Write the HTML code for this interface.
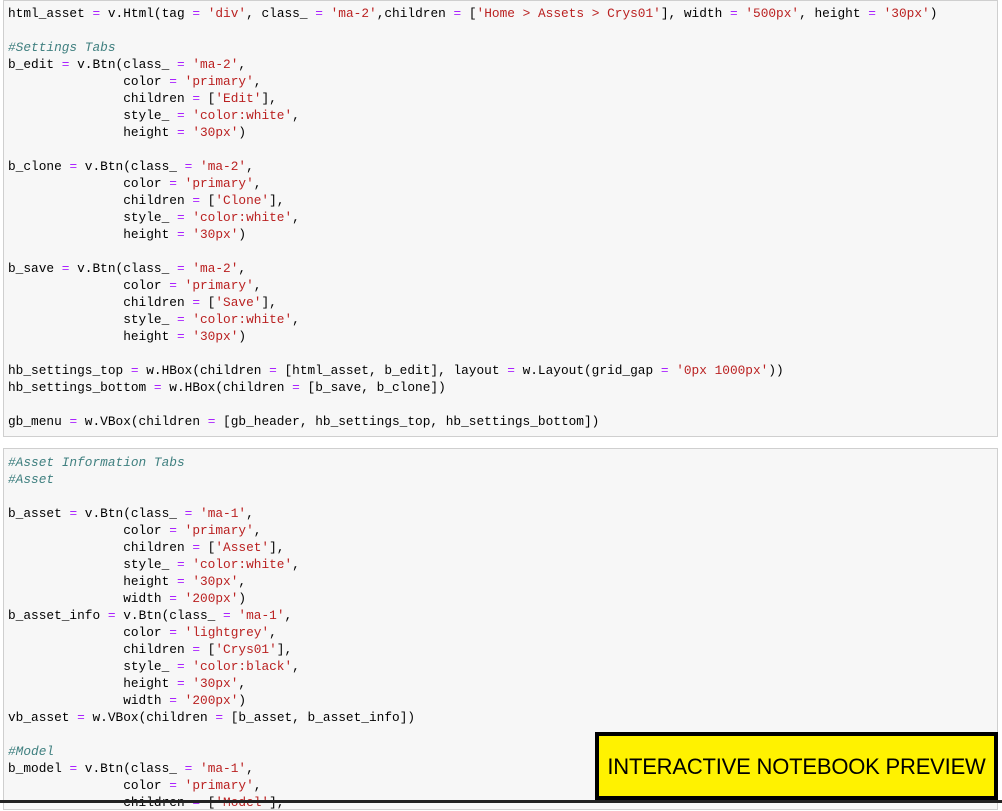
<!DOCTYPE html>
<html><head><style>
body{margin:0;background:#fff;width:1002px;height:803px;overflow:hidden;position:relative;font-family:"Liberation Mono",monospace;}
.cell{position:absolute;left:3px;width:993px;background:#f7f7f7;border:1px solid #cfcfcf;}
pre{margin:0;position:absolute;left:4px;font-family:"Liberation Mono",monospace;font-size:12.8px;line-height:17px;color:#000;}
.o{color:#aa22ff}.s{color:#ba2121}.c{color:#408080;font-style:italic}
#yb{position:absolute;left:595px;top:732px;width:395px;height:60px;background:#fff200;border:4px solid #000;font-family:"Liberation Sans",sans-serif;font-size:22px;line-height:62px;text-align:center;white-space:nowrap;letter-spacing:-0.2px}
#bl{position:absolute;left:0;top:800px;width:1002px;height:3px;background:#222}
</style></head><body>
<div class="cell" style="top:0;height:435px">
<pre style="top:4px">html_asset <span class="o">=</span> v.Html(tag <span class="o">=</span> <span class="s">'div'</span>, class_ <span class="o">=</span> <span class="s">'ma-2'</span>,children <span class="o">=</span> [<span class="s">'Home &gt; Assets &gt; Crys01'</span>], width <span class="o">=</span> <span class="s">'500px'</span>, height <span class="o">=</span> <span class="s">'30px'</span>)

<span class="c">#Settings Tabs</span>
b_edit <span class="o">=</span> v.Btn(class_ <span class="o">=</span> <span class="s">'ma-2'</span>,
               color <span class="o">=</span> <span class="s">'primary'</span>,
               children <span class="o">=</span> [<span class="s">'Edit'</span>],
               style_ <span class="o">=</span> <span class="s">'color:white'</span>,
               height <span class="o">=</span> <span class="s">'30px'</span>)

b_clone <span class="o">=</span> v.Btn(class_ <span class="o">=</span> <span class="s">'ma-2'</span>,
               color <span class="o">=</span> <span class="s">'primary'</span>,
               children <span class="o">=</span> [<span class="s">'Clone'</span>],
               style_ <span class="o">=</span> <span class="s">'color:white'</span>,
               height <span class="o">=</span> <span class="s">'30px'</span>)

b_save <span class="o">=</span> v.Btn(class_ <span class="o">=</span> <span class="s">'ma-2'</span>,
               color <span class="o">=</span> <span class="s">'primary'</span>,
               children <span class="o">=</span> [<span class="s">'Save'</span>],
               style_ <span class="o">=</span> <span class="s">'color:white'</span>,
               height <span class="o">=</span> <span class="s">'30px'</span>)

hb_settings_top <span class="o">=</span> w.HBox(children <span class="o">=</span> [html_asset, b_edit], layout <span class="o">=</span> w.Layout(grid_gap <span class="o">=</span> <span class="s">'0px 1000px'</span>))
hb_settings_bottom <span class="o">=</span> w.HBox(children <span class="o">=</span> [b_save, b_clone])

gb_menu <span class="o">=</span> w.VBox(children <span class="o">=</span> [gb_header, hb_settings_top, hb_settings_bottom])</pre>
</div>
<div class="cell" style="top:448px;height:360px">
<pre style="top:5px"><span class="c">#Asset Information Tabs</span>
<span class="c">#Asset</span>

b_asset <span class="o">=</span> v.Btn(class_ <span class="o">=</span> <span class="s">'ma-1'</span>,
               color <span class="o">=</span> <span class="s">'primary'</span>,
               children <span class="o">=</span> [<span class="s">'Asset'</span>],
               style_ <span class="o">=</span> <span class="s">'color:white'</span>,
               height <span class="o">=</span> <span class="s">'30px'</span>,
               width <span class="o">=</span> <span class="s">'200px'</span>)
b_asset_info <span class="o">=</span> v.Btn(class_ <span class="o">=</span> <span class="s">'ma-1'</span>,
               color <span class="o">=</span> <span class="s">'lightgrey'</span>,
               children <span class="o">=</span> [<span class="s">'Crys01'</span>],
               style_ <span class="o">=</span> <span class="s">'color:black'</span>,
               height <span class="o">=</span> <span class="s">'30px'</span>,
               width <span class="o">=</span> <span class="s">'200px'</span>)
vb_asset <span class="o">=</span> w.VBox(children <span class="o">=</span> [b_asset, b_asset_info])

<span class="c">#Model</span>
b_model <span class="o">=</span> v.Btn(class_ <span class="o">=</span> <span class="s">'ma-1'</span>,
               color <span class="o">=</span> <span class="s">'primary'</span>,
               children <span class="o">=</span> [<span class="s">'Model'</span>],</pre>
</div>
<div id="yb">INTERACTIVE NOTEBOOK PREVIEW</div>
<div id="bl"></div>
</body></html>
